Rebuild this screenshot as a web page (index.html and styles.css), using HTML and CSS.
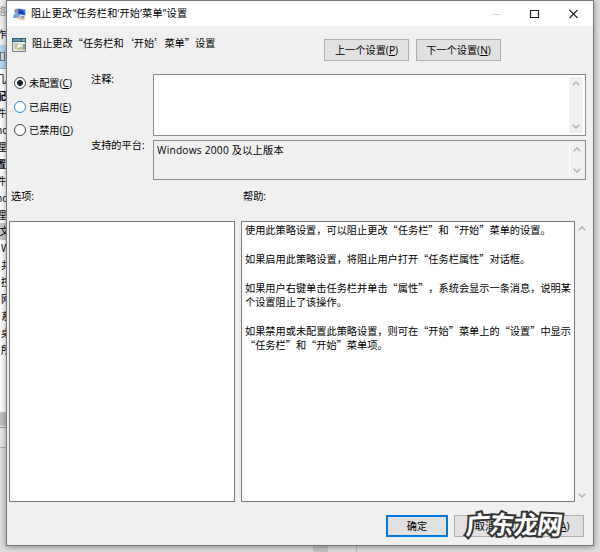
FILE: index.html
```
<!DOCTYPE html>
<html lang="zh-CN">
<head>
<meta charset="utf-8">
<title>策略设置</title>
<link rel="stylesheet" href="styles.css">
</head>
<body>
<div class="desktop">
  <div class="behind">
    <div class="b-title">络</div>
    <div class="b-menu">作(</div>
    <div class="b-tool"><i></i></div>
    <div class="b-tree">
      <div>几</div><div class="strong">配</div><div>件</div><div>nd</div><div>理</div><div class="strong">置</div><div>件</div><div>nd</div><div>理</div><div class="sel">“文</div><div class="in">W</div><div class="in">共</div><div class="in">控</div><div class="in">网</div><div class="in">系</div><div class="in">桌</div><div class="in">所</div>
    </div>
    <div class="b-scroll"></div>
    <div class="b-status"></div>
  </div>
  <div class="under"><i></i></div>

  <div class="dialog">
    <header class="titlebar">
      <svg class="app-icon" viewBox="0 0 14 14"><path d="M4 1l9 1v7l-9-1z" fill="#bcd0ec"/><path d="M5 2l7 1v5l-7-1z" fill="#153fc4"/><path d="M9 3l3 .5V6z" fill="#5b8cf0"/><path d="M8 9h3l1 2H7z" fill="#8694ac"/><circle cx="3.400" cy="4" r="2.200" fill="#8b939c"/><path d="M0 11q0-5 4-5 3 0 3 5z" fill="#6fa8d8"/><path d="M5 9.500l7 2-1 2-7-2z" fill="#e6c399"/></svg>
      <span class="title">阻止更改“任务栏和‘开始’菜单”设置</span>
      <svg class="controls" viewBox="0 0 98 26"><path d="M5 13.500h9" stroke="#ddd" fill="none"/><path d="M43.500 9.500h8v7h-8z" stroke="#222" fill="none" stroke-width="1.200"/><path d="M82.500 9l8 8m0-8l-8 8" stroke="#222" fill="none" stroke-width="1.100"/></svg>
    </header>

    <section class="heading">
      <svg class="policy-icon" viewBox="0 0 14 14"><path d="M.5.500h13v13H.5z" fill="#e9efdf" stroke="#738087"/><path d="M0 0h14v4H0z" fill="#315c78"/><path d="M1 2h8" stroke="#9bd4dd"/><path d="M10 2h3" stroke="#fff"/><path d="M2 6h4M2 8h3M2 10h3" stroke="#9a9fa5"/><circle cx="8" cy="9" r="3" fill="#fff" stroke="#b5c4a0"/><path d="M5 11l4-3 2 3z" fill="#d5b95f"/><path d="M11 6h2v6h-2z" fill="#78a8a0"/></svg>
      <span class="head-text">阻止更改“任务栏和‘开始’菜单”设置</span>
      <button class="btn prev">上一个设置(<u>P</u>)</button>
      <button class="btn next">下一个设置(<u>N</u>)</button>
    </section>

    <section class="config">
      <div class="radios">
        <div class="radio"><i class="on"></i><span>未配置(<u>C</u>)</span></div>
        <div class="radio"><i class="hot"></i><span>已启用(<u>E</u>)</span></div>
        <div class="radio"><i></i><span>已禁用(<u>D</u>)</span></div>
      </div>
      <div class="fields">
        <label>注释:</label>
        <div class="box comment"><div class="bar"><svg viewBox="0 0 8 5"><path d="M.8 4.200L4 1l3.200 3.200"/></svg><svg viewBox="0 0 8 5"><path d="M.8.800L4 4 7.200.800"/></svg></div></div>
        <label>支持的平台:</label>
        <div class="box platform"><span>Windows 2000 及以上版本</span><div class="bar"><svg viewBox="0 0 8 5"><path d="M.8 4.200L4 1l3.200 3.200"/></svg><svg viewBox="0 0 8 5"><path d="M.8.800L4 4 7.200.800"/></svg></div></div>
      </div>
    </section>

    <section class="panes">
      <div class="options-label">选项:</div><div class="help-label">帮助:</div><div></div>
      <div class="pane options"></div>
      <div class="pane help">
        <p>使用此策略设置，可以阻止更改“任务栏”和“开始”菜单的设置。</p>
        <p>如果启用此策略设置，将阻止用户打开“任务栏属性”对话框。</p>
        <p>如果用户右键单击任务栏并单击“属性”，系统会显示一条消息，说明某<br>个设置阻止了该操作。</p>
        <p>如果禁用或未配置此策略设置，则可在“开始”菜单上的“设置”中显示<br>“任务栏”和“开始”菜单项。</p>
      </div>
      <div class="bar help-bar"><svg viewBox="0 0 8 5"><path d="M.8 4.200L4 1l3.200 3.200"/></svg><svg viewBox="0 0 8 5"><path d="M.8.800L4 4 7.200.800"/></svg></div>
    </section>

    <footer class="actions">
      <button class="btn primary">确定</button>
      <button class="btn">取消</button>
      <button class="btn">应用(<u>A</u>)</button>
    </footer>
  </div>
  <div class="mark"><span>广</span><span>东</span><span>龙</span><span>网</span></div>
</div>
</body>
</html>
```
FILE: styles.css
```
* { box-sizing: border-box; }
body {
  margin: 0;
  font: 10.2px/14.4px "Open Sans", "Noto Sans CJK SC", sans-serif;
  text-spacing-trim: space-all;
  color: #000;
}
.desktop {
  position: relative;
  width: 600px;
  height: 552px;
  overflow: hidden;
  background: #dedede;
}
.behind {
  width: 7px;
  overflow: hidden;
  white-space: nowrap;
  background: #f0f0f0;
}
.b-title { height: 23px; padding-top: 4px; color: #999; text-indent: -4px; }
.b-menu { height: 22px; padding-top: 4px; text-indent: -4px; }
.b-tool { height: 24px; padding-top: 7px; background: #b8d8ef; border-bottom: 1px solid #8eb4d0; }
.b-tool i { display: block; width: 5px; height: 9px; border: 1px solid #678; background: #ddd; }
.b-tree { height: 343px; padding-top: 2px; background: #fff; }
.b-tree div { height: 16.95px; line-height: 16.95px; text-indent: -4px; }
.b-tree .in { text-indent: 1px; }
.b-tree .strong { font-weight: 700; }
.b-tree .sel { background: #c8c8c8; }
.b-scroll { height: 14px; background: #c0c0c0; }
.b-status { height: 21px; border-top: 1px solid #8a8a9a; border-bottom: 1px solid #aaa; margin-top: 1px; background: #e6e6e6; }
.under {
  position: absolute;
  top: 546px;
  left: 0;
  width: 600px;
  height: 6px;
  padding-left: 313px;
}
.under i { display: block; width: 44px; height: 6px; border-left: 15px solid #c6c6c6; border-right: 1px solid #bbb; }
.dialog {
  position: absolute;
  left: 6px;
  top: 0;
  width: 588px;
  height: 546px;
  display: flex;
  flex-direction: column;
  background: #f0f0f0;
  border: 1px solid #777;
  box-shadow: 0 1px 6px rgba(0,0,0,.4);
}
.titlebar {
  display: flex;
  align-items: center;
  height: 25px;
  padding-left: 6px;
  background: #fff;
}
.title { letter-spacing: .17px; }
.app-icon { width: 14px; height: 14px; margin-right: 4px; }
.controls { width: 98px; height: 26px; margin-left: auto; margin-right: 8px; }
.heading { display: flex; height: 48px; padding: 11px 0 0 5px; }
.policy-icon { width: 14px; height: 14px; margin-top: 1px; }
.head-text { width: 292px; margin: -1px 0 0 6px; font-family: "Noto Sans CJK SC", sans-serif; white-space: nowrap; }
.btn {
  width: 62px;
  height: 22px;
  padding: 0;
  border: 1px solid #adadad;
  background: #e1e1e1;
  color: #000;
  font: inherit;
  line-height: 19px;
}
.btn.prev, .btn.next { width: 85px; margin-top: 2px; }
.btn.next { margin-left: 7px; }
u { text-underline-offset: 1px; }
.config { display: flex; height: 107px; }
.radios { width: 84px; padding: 0 0 0 7px; margin-top: -1px; }
.radio { display: flex; align-items: center; height: 23.8px; line-height: 14px; padding-bottom: 4px; }
.radio i { width: 12px; height: 12px; margin: 0 3px 0 0; border: 1px solid #444; border-radius: 50%; background: #fff; }
.radio span { white-space: nowrap; }
.radio .on { background: radial-gradient(circle, #222 0 2.6px, #fff 3.2px); }
.radio .hot { border-color: #2a8ad4; }
.fields { display: grid; grid-template-columns: 62px 433px; grid-template-rows: 62px 40px; row-gap: 4px; }
.fields label { margin-top: -2px; white-space: nowrap; }
.box { display: flex; border: 1px solid #8a8a8a; padding: 2px; }
.comment { background: #fff; }
.platform span { padding-left: 1px; line-height: 14px; letter-spacing: .22px; }
.bar {
  display: flex;
  flex-direction: column;
  justify-content: space-between;
  align-items: center;
  width: 14px;
  margin-left: auto;
  padding: 4px 0;
  background: #f0f0f0;
}
.platform .bar { border-left: 1px solid #fff; }
.bar svg { width: 8px; height: 5px; fill: none; stroke: #b0b0b0; stroke-width: 1.5; }
.panes {
  display: grid;
  grid-template-columns: 226px 334px 14px;
  grid-template-rows: 32px 281px;
  column-gap: 6px;
  padding: 8px 0 0 2px;
}
.options-label { padding: 0 0 0 2px; }
.help-label { padding: 0 0 0 2px; }
.pane { border: 1px solid #7b7b7b; background: #fff; }
.help { padding: 1px 0 0 3px; font-family: "Noto Sans CJK SC", sans-serif; white-space: nowrap; }
.help p { margin: 0 0 14.4px; }
.help-bar { margin-left: -6px; padding: 5px 0 4px; }
.actions { display: flex; justify-content: flex-end; gap: 6px; padding: 13px 9px 0 0; }
.btn.primary { border: 2px solid #0078d7; line-height: 17px; }
.mark {
  position: absolute;
  left: 466px;
  top: 509px;
  display: flex;
  font: 700 25px/28px "Noto Sans CJK SC", sans-serif;
  color: #fff;
  -webkit-text-stroke: 4px #333;
  paint-order: stroke fill;
  transform: skewX(-6deg);
  white-space: nowrap;
}
.mark span { width: 24px; }
.mark span:nth-child(odd) { transform: rotate(-3deg); }
.mark span:nth-child(even) { transform: rotate(3deg); }
```
